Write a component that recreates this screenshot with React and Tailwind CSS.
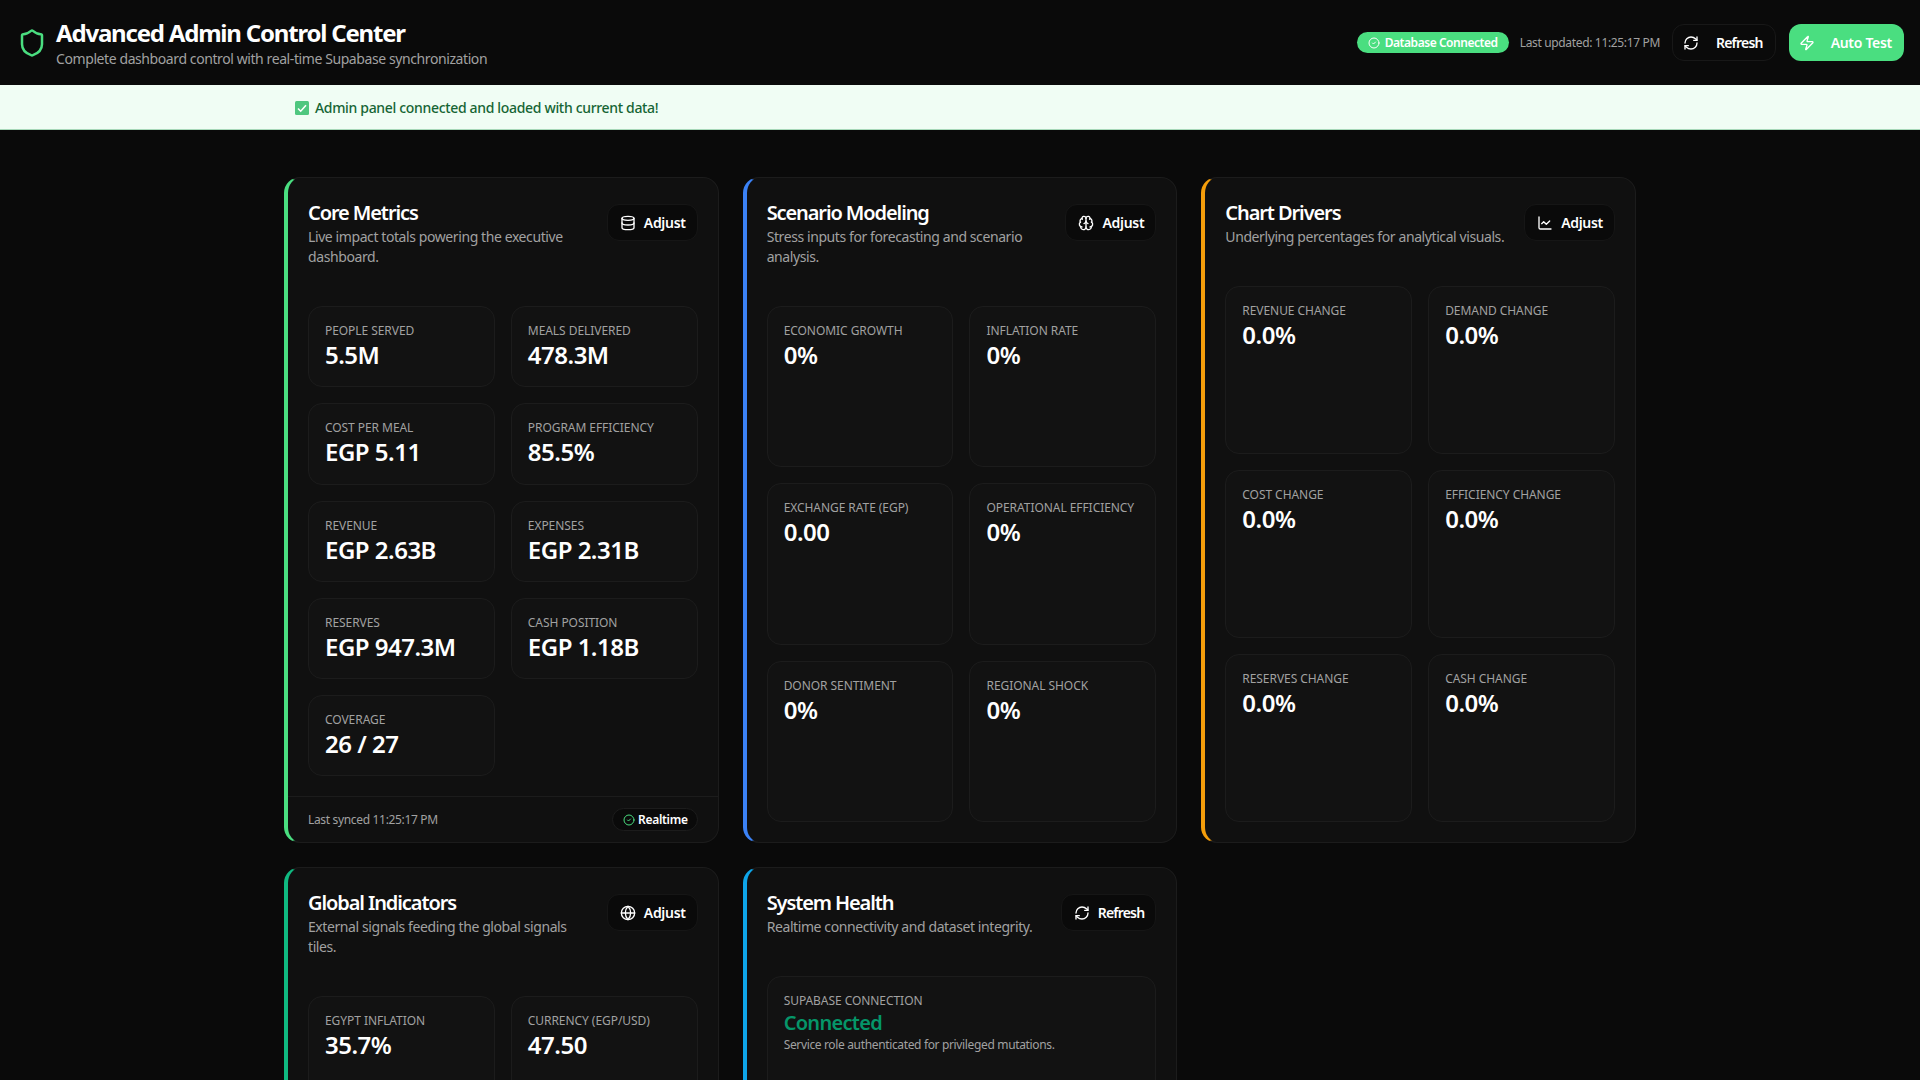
import { Shield, CircleCheck, RefreshCw, Zap, Database, Brain, ChartLine, Globe } from "lucide-react";

const core = [["People Served","5.5M"],["Meals Delivered","478.3M"],["Cost Per Meal","EGP 5.11"],["Program Efficiency","85.5%"],["Revenue","EGP 2.63B"],["Expenses","EGP 2.31B"],["Reserves","EGP 947.3M"],["Cash Position","EGP 1.18B"],["Coverage","26 / 27"]];
const scen = [["Economic Growth","0%"],["Inflation Rate","0%"],["Exchange Rate (EGP)","0.00"],["Operational Efficiency","0%"],["Donor Sentiment","0%"],["Regional Shock","0%"]];
const chart = [["Revenue Change","0.0%"],["Demand Change","0.0%"],["Cost Change","0.0%"],["Efficiency Change","0.0%"],["Reserves Change","0.0%"],["Cash Change","0.0%"]];
const glob = [["Egypt Inflation","35.7%"],["Currency (EGP/USD)","47.50"]];

function Tile({ label, value, tall }) {
  return (
    <div className={`rounded-[14px] border border-[#1c1c1c] bg-[#121212] px-4 pt-4 pb-[14.7px] ${tall ? "min-h-[130px]" : ""}`}>
      <div className="text-xs leading-4 tracking-[-0.06px] uppercase text-[#a1a1a1]">{label}</div>
      <div className="text-2xl leading-[32.6px] font-semibold tracking-[-0.5px] text-white">{value}</div>
    </div>
  );
}

function Btn({ icon: Icon, label }) {
  return (
    <button className={`mt-[5px] flex h-[37px] shrink-0 items-center gap-2 rounded-xl border border-[#161616] bg-[#0a0a0a] pr-[11px] pl-3 text-sm font-semibold text-white ${label === "Refresh" ? "tracking-[-0.8px]" : "tracking-[-0.3px]"}`}>
      <Icon size={16} strokeWidth={2} />
      {label}
    </button>
  );
}

function Card({ accent, title, desc, icon, btn = "Adjust", children, footer }) {
  return (
    <section className={`flex flex-col rounded-2xl border border-[#1c1c1c] border-l-4 bg-[#101010] ${accent}`}>
      <div className="flex items-start justify-between gap-4 px-5 pt-[21px]">
        <div className="min-w-0">
          <h2 className="text-xl leading-7 font-semibold tracking-[-1.1px] text-white">{title}</h2>
          <p className="text-sm leading-5 tracking-[-0.41px] text-[#a1a1a1]">{desc}</p>
        </div>
        <Btn icon={icon} label={btn} />
      </div>
      <div className="mt-[39px] flex flex-1 flex-col px-5 pb-5">{children}</div>
      {footer}
    </section>
  );
}

export default function App() {
  return (
    <div className="h-screen overflow-hidden bg-[#0a0a0a] font-['Noto_Sans','Open_Sans',sans-serif]">
      <header className="flex h-[85px] items-center justify-between bg-[#0a0a0a] pr-4 pl-[17px]">
        <div className="flex items-center gap-[9px]">
          <Shield size={30} strokeWidth={2} className="text-[#4ade80]" />
          <div>
            <h1 className="text-2xl leading-8 font-bold tracking-[-1.2px] text-white">Advanced Admin Control Center</h1>
            <p className="text-sm leading-5 tracking-[-0.41px] text-[#a1a1a1]">Complete dashboard control with real-time Supabase synchronization</p>
          </div>
        </div>
        <div className="flex items-center">
          <span className="flex h-[21px] items-center gap-[5px] rounded-full bg-[#4ade80] px-[11px] text-xs font-semibold tracking-[-0.45px] text-white">
            <CircleCheck size={12} />
            Database Connected
          </span>
          <span className="ml-[11px] text-xs tracking-[-0.34px] text-[#a1a1a1]">Last updated: 11:25:17 PM</span>
          <button className="ml-3 flex h-[37px] items-center gap-[17px] rounded-xl border border-[#181818] bg-[#0a0a0a] pr-3 pl-[10px] text-sm font-semibold tracking-[-0.8px] text-white">
            <RefreshCw size={16} />
            Refresh
          </button>
          <button className="ml-[13px] flex h-[37px] items-center gap-[16px] rounded-xl bg-[#4ade80] pr-3 pl-[10px] text-sm font-semibold tracking-[-0.3px] text-white">
            <Zap size={16} />
            Auto Test
          </button>
        </div>
      </header>
      <div className="flex h-[45px] items-center gap-[6px] border-b border-[#a7d8b8] bg-[#f0fdf4] pt-[2px] pl-[295px] text-sm font-medium tracking-[-0.33px] text-[#166534]">
        <svg width="14" height="14" viewBox="0 0 14 14"><rect width="14" height="14" rx="1.5" fill="#4fc77f" /><path d="M3 7.5l2.7 2.7L11 4.2" fill="none" stroke="#fff" strokeWidth="1.6" /></svg>
        Admin panel connected and loaded with current data!
      </div>
      <main className="mx-auto grid w-[1352px] grid-cols-3 items-stretch gap-x-[24px] gap-y-[24px] pt-[47px]">
        <Card accent="border-l-[#4ade80]" title="Core Metrics" desc="Live impact totals powering the executive dashboard." icon={Database}
          footer={
            <div className="flex h-[46px] items-center justify-between border-t border-[#1c1c1c] px-5">
              <span className="text-xs tracking-[-0.33px] text-[#a1a1a1]">Last synced 11:25:17 PM</span>
              <span className="flex h-[23px] items-center gap-[3px] rounded-full border border-[#1c1c1c] bg-[#0a0a0a] pr-[9px] pl-[10px] text-xs font-semibold tracking-[-0.3px] text-white">
                <CircleCheck size={12} className="text-[#4ade80]" />
                Realtime
              </span>
            </div>
          }>
          <div className="grid grid-cols-2 gap-4">{core.map(([l, v]) => <Tile key={l} label={l} value={v} />)}</div>
        </Card>
        <Card accent="border-l-[#3b82f6]" title="Scenario Modeling" desc="Stress inputs for forecasting and scenario analysis." icon={Brain}>
          <div className="grid flex-1 auto-rows-fr grid-cols-2 gap-4">{scen.map(([l, v]) => <Tile key={l} label={l} value={v} />)}</div>
        </Card>
        <Card accent="border-l-[#f59e0b]" title="Chart Drivers" desc="Underlying percentages for analytical visuals." icon={ChartLine}>
          <div className="grid flex-1 auto-rows-fr grid-cols-2 gap-4">{chart.map(([l, v]) => <Tile key={l} label={l} value={v} />)}</div>
        </Card>
        <Card accent="border-l-[#10b981]" title="Global Indicators" desc="External signals feeding the global signals tiles." icon={Globe}>
          <div className="grid grid-cols-2 gap-4">{glob.map(([l, v]) => <Tile key={l} label={l} value={v} tall />)}</div>
        </Card>
        <Card accent="border-l-[#0ea5e9]" title="System Health" desc="Realtime connectivity and dataset integrity." icon={RefreshCw} btn="Refresh">
          <div className="min-h-[130px] rounded-[14px] border border-[#1c1c1c] bg-[#121212] p-4">
            <div className="text-xs leading-4 tracking-[-0.06px] uppercase text-[#a1a1a1]">Supabase Connection</div>
            <div className="text-xl leading-7 font-semibold tracking-[-0.7px] text-[#059669]">Connected</div>
            <div className="text-xs leading-4 tracking-[-0.35px] text-[#a1a1a1]">Service role authenticated for privileged mutations.</div>
          </div>
        </Card>
      </main>
    </div>
  );
}
